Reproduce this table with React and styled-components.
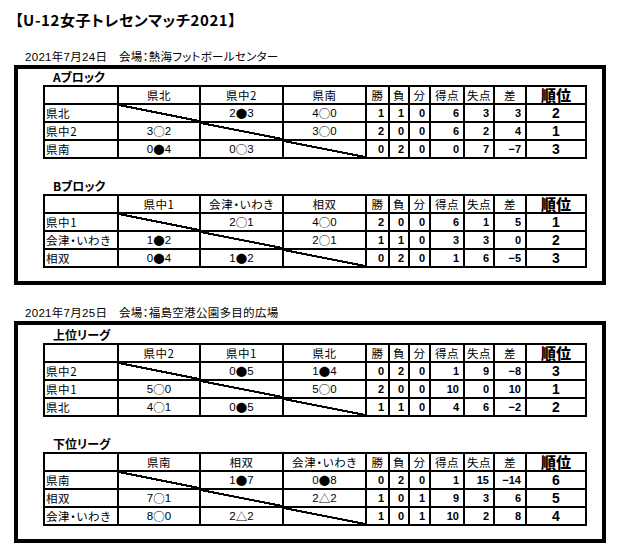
import React from "react";
import styled, { createGlobalStyle } from "styled-components";

const GlobalStyle = createGlobalStyle`
  body {
    margin: 0;
    background: #fff;
    color: #000;
    font-family: "Liberation Sans", "Noto Sans CJK JP", sans-serif;
    font-feature-settings: "palt";
  }
`;

const $Page = styled.div`
  padding: 11px 0 0 14px;
  width: 592px;
`;

const $Title = styled.h1`
  margin: 0 0 0 1px;
  font-size: 15px;
  line-height: 18px;
  font-weight: bold;
  letter-spacing: 0.6px;
  font-family: "Noto Sans CJK JP", sans-serif;
`;

const $DateLine = styled.div`
  margin: ${(p) => p.$top}px 0 1px 11px;
  font-size: 11.5px;
  line-height: 14px;
  letter-spacing: 0.3px;
`;

const $Frame = styled.section`
  box-sizing: border-box;
  width: 592px;
  border: 4px solid #000;
  padding: ${(p) => p.$padTop}px 0 13px 25px;
`;

const $LeagueLabel = styled.div`
  margin-top: ${(p) => (p.$first ? 0 : 19)}px;
  padding-left: 10px;
  font-size: 12px;
  line-height: 16px;
  height: 16px;
  font-weight: bold;
  font-family: "Noto Sans CJK JP", sans-serif;
`;

const $Table = styled.table`
  border-collapse: collapse;
  table-layout: fixed;
  width: 542px;
  font-size: 11.5px;
`;

const $Col = styled.col`
  width: ${(p) => p.$w}px;
`;

const $Row = styled.tr`
  height: 18px;
`;

const cellBase = `
  border: 2px solid #000;
  height: 16px;
  line-height: 16px;
  padding: 0;
  white-space: nowrap;
  vertical-align: middle;
`;

const $HeadCell = styled.td`
  ${cellBase}
  text-align: center;
  font-size: ${(p) => (p.$rank ? 15 : 11.5)}px;
  font-weight: ${(p) => (p.$rank ? 900 : 400)};
  font-family: "Noto Sans CJK JP", sans-serif;
  line-height: 14px;
  letter-spacing: ${(p) => (p.$rank ? 0 : 0.6)}px;
`;

const $NameCell = styled.td`
  ${cellBase}
  text-align: left;
  padding-left: 1px;
  font-family: "Noto Sans CJK JP", sans-serif;
  line-height: 14px;
  letter-spacing: 0.6px;
`;

const $ResultCell = styled.td`
  ${cellBase}
  text-align: center;
  background: ${(p) =>
    p.$diag
      ? "linear-gradient(to top right, transparent calc(50% - 1.1px), #000 calc(50% - 1px), #000 calc(50% + 1px), transparent calc(50% + 1.1px))"
      : "none"};
`;

const $Mark = styled.span`
  display: inline-block;
  height: 14px;
  line-height: 14px;
  vertical-align: top;
  font-family: "Noto Sans CJK JP", sans-serif;
  font-feature-settings: normal;
  font-size: 11.5px;
  margin-top: 1px;
`;

const $StatCell = styled.td`
  ${cellBase}
  text-align: right;
  padding-right: 4px;
  font-weight: bold;
  font-size: 11px;
`;

const $RankCell = styled.td`
  ${cellBase}
  text-align: center;
  font-weight: bold;
  font-size: 14px;
`;

const widths = [74, 82, 83, 83, 23, 20, 21, 34, 30, 32, 60];
const statHeads = ["勝", "負", "分", "得点", "失点", "差"];

const days = [
  {
    date: "2021年7月24日　会場：熱海フットボールセンター",
    top: 21,
    padTop: 0,
    leagues: [
      {
        name: "Aブロック",
        teams: ["県北", "県中2", "県南"],
        rows: [
          { r: [null, "2●3", "4○0"], s: [1, 1, 0, 6, 3, 3], rank: 2 },
          { r: ["3○2", null, "3○0"], s: [2, 0, 0, 6, 2, 4], rank: 1 },
          { r: ["0●4", "0○3", null], s: [0, 2, 0, 0, 7, "−7"], rank: 3 },
        ],
      },
      {
        name: "Bブロック",
        teams: ["県中1", "会津・いわき", "相双"],
        rows: [
          { r: [null, "2○1", "4○0"], s: [2, 0, 0, 6, 1, 5], rank: 1 },
          { r: ["1●2", null, "2○1"], s: [1, 1, 0, 3, 3, 0], rank: 2 },
          { r: ["0●4", "1●2", null], s: [0, 2, 0, 1, 6, "−5"], rank: 3 },
        ],
      },
    ],
  },
  {
    date: "2021年7月25日　会場：福島空港公園多目的広場",
    top: 21,
    padTop: 2,
    leagues: [
      {
        name: "上位リーグ",
        teams: ["県中2", "県中1", "県北"],
        rows: [
          { r: [null, "0●5", "1●4"], s: [0, 2, 0, 1, 9, "−8"], rank: 3 },
          { r: ["5○0", null, "5○0"], s: [2, 0, 0, 10, 0, 10], rank: 1 },
          { r: ["4○1", "0●5", null], s: [1, 1, 0, 4, 6, "−2"], rank: 2 },
        ],
      },
      {
        name: "下位リーグ",
        teams: ["県南", "相双", "会津・いわき"],
        rows: [
          { r: [null, "1●7", "0●8"], s: [0, 2, 0, 1, 15, "−14"], rank: 6 },
          { r: ["7○1", null, "2△2"], s: [1, 0, 1, 9, 3, 6], rank: 5 },
          { r: ["8○0", "2△2", null], s: [1, 0, 1, 10, 2, 8], rank: 4 },
        ],
      },
    ],
  },
];

const Score = ({ text }) => (
  <>
    {text[0]}
    <$Mark>{text[1]}</$Mark>
    {text[2]}
  </>
);

const League = ({ league, first }) => (
  <>
    <$LeagueLabel $first={first}>{league.name}</$LeagueLabel>
    <$Table>
      <colgroup>
        {widths.map((w, i) => (
          <$Col key={i} $w={w} />
        ))}
      </colgroup>
      <tbody>
        <$Row>
          <$HeadCell />
          {league.teams.map((t) => (
            <$HeadCell key={t}>{t}</$HeadCell>
          ))}
          {statHeads.map((h) => (
            <$HeadCell key={h}>{h}</$HeadCell>
          ))}
          <$HeadCell $rank>順位</$HeadCell>
        </$Row>
        {league.rows.map((row, i) => (
          <$Row key={i}>
            <$NameCell>{league.teams[i]}</$NameCell>
            {row.r.map((res, j) =>
              res ? (
                <$ResultCell key={j}>
                  <Score text={res} />
                </$ResultCell>
              ) : (
                <$ResultCell key={j} $diag />
              )
            )}
            {row.s.map((v, j) => (
              <$StatCell key={j}>{v}</$StatCell>
            ))}
            <$RankCell>{row.rank}</$RankCell>
          </$Row>
        ))}
      </tbody>
    </$Table>
  </>
);

export default function App() {
  return (
    <>
      <GlobalStyle />
      <$Page>
        <$Title>【U-12女子トレセンマッチ2021】</$Title>
        {days.map((day) => (
          <React.Fragment key={day.date}>
            <$DateLine $top={day.top}>{day.date}</$DateLine>
            <$Frame $padTop={day.padTop}>
              {day.leagues.map((lg, i) => (
                <League key={lg.name} league={lg} first={i === 0} />
              ))}
            </$Frame>
          </React.Fragment>
        ))}
      </$Page>
    </>
  );
}
